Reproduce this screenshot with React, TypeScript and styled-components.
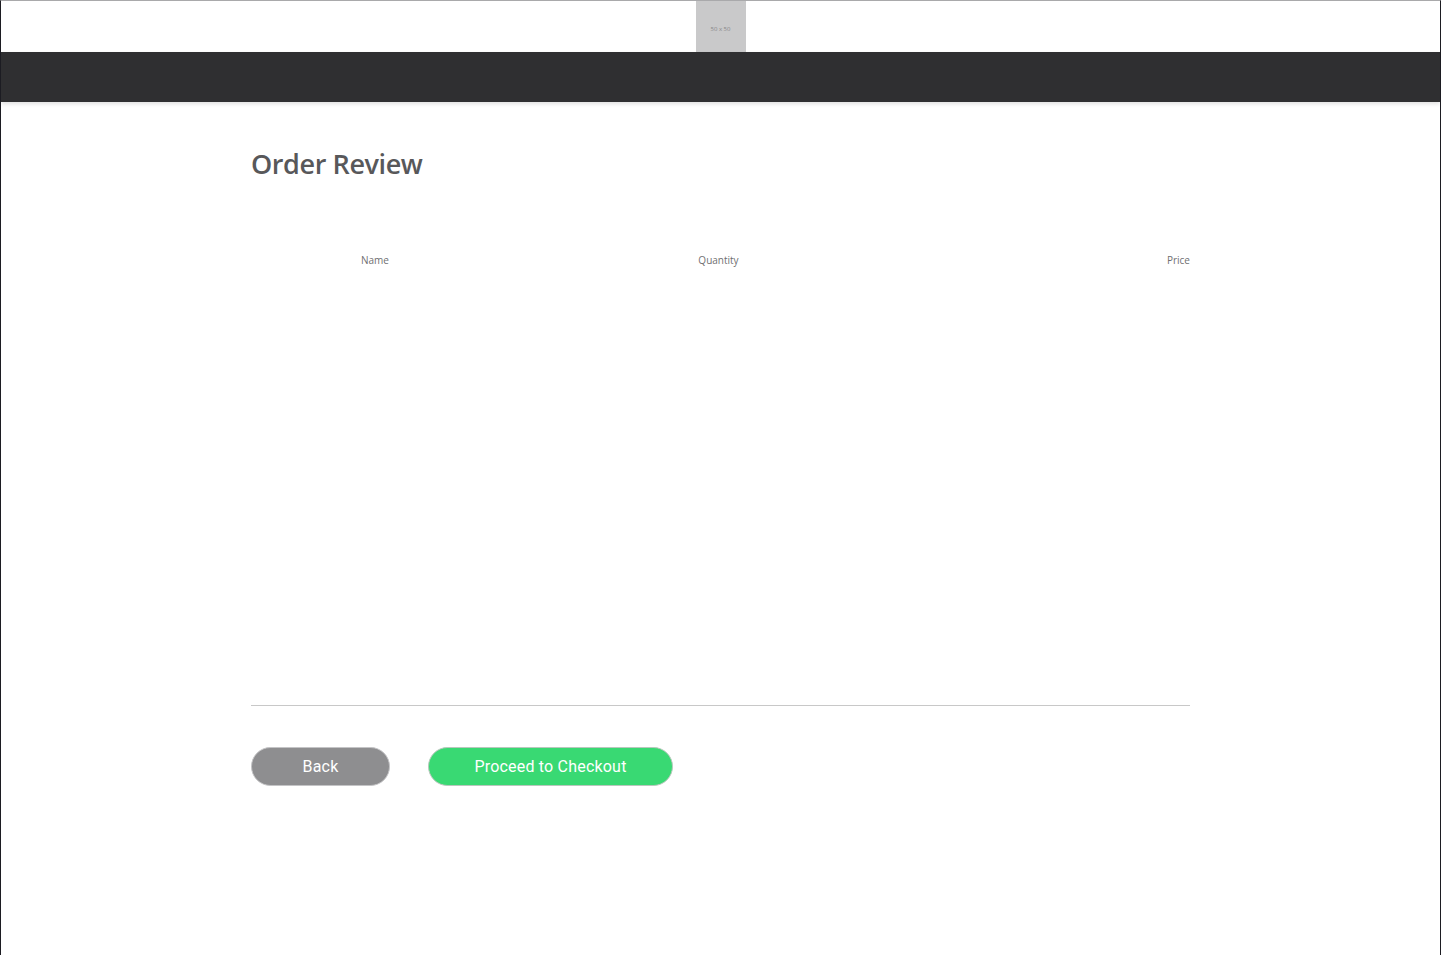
import styled, { createGlobalStyle } from "styled-components";

const GlobalStyle = createGlobalStyle`
  html, body {
    margin: 0;
    padding: 0;
    background: #ffffff;
  }
  * {
    box-sizing: border-box;
  }
`;

const Frame = styled.div`
  width: 1441px;
  height: 955px;
  border-top: 1px solid #a9a9ab;
  border-left: 1px solid #1c1c22;
  border-right: 1px solid #1c1c22;
  background: #ffffff;
  overflow: hidden;
`;

const TopBar = styled.header`
  height: 51px;
  display: flex;
  justify-content: center;
  background: #ffffff;
`;

const Placeholder = styled.div`
  width: 50px;
  height: 51px;
  padding-top: 4px;
  background: #c9c9ca;
  color: #888;
  font-family: "Open Sans", sans-serif;
  font-size: 6px;
  display: flex;
  align-items: center;
  justify-content: center;
`;

const NavBar = styled.nav`
  height: 50px;
  background: #2f2f31;
  box-shadow: 0 2px 4px rgba(0, 0, 0, 0.12);
  position: relative;
`;

const Main = styled.main`
  width: 939px;
  margin: 0 0 0 250px;
  padding-top: 44px;
`;

const Title = styled.h1`
  margin: 0;
  font-family: "Open Sans", sans-serif;
  font-weight: 600;
  font-size: 27px;
  letter-spacing: -0.4px;
  color: #58585a;
  line-height: 36px;
`;

const Table = styled.div`
  margin-top: 71px;
  height: 453px;
  border-bottom: 1px solid #c8c8c8;
`;

const HeadRow = styled.div`
  display: grid;
  grid-template-columns: 248px 439px 1fr;
  font-family: "Open Sans", sans-serif;
  font-size: 10px;
  color: #6f6f71;
  line-height: 14px;
`;

const HeadCell = styled.div<{ $align: "center" | "right" }>`
  text-align: ${({ $align }) => $align};
`;

const Actions = styled.div`
  display: flex;
  gap: 38px;
  margin-top: 41px;
`;

const Button = styled.button<{ $variant: "muted" | "go" }>`
  height: 39px;
  width: ${({ $variant }) => ($variant === "go" ? "245px" : "139px")};
  border-radius: 20px;
  border: 1px solid ${({ $variant }) => ($variant === "go" ? "#b9c7bd" : "#c4c4c6")};
  background: ${({ $variant }) => ($variant === "go" ? "#39d973" : "#8e8e90")};
  color: #ffffff;
  font-family: Roboto, "Liberation Sans", sans-serif;
  font-weight: 400;
  font-size: 16px;
  letter-spacing: 0.2px;
  padding: 0;
  cursor: pointer;
`;

export default function App() {
  return (
    <>
      <GlobalStyle />
      <Frame>
        <TopBar>
          <Placeholder>50 x 50</Placeholder>
        </TopBar>
        <NavBar />
        <Main>
          <Title>Order Review</Title>
          <Table>
            <HeadRow>
              <HeadCell $align="center">Name</HeadCell>
              <HeadCell $align="center">Quantity</HeadCell>
              <HeadCell $align="right">Price</HeadCell>
            </HeadRow>
          </Table>
          <Actions>
            <Button $variant="muted">Back</Button>
            <Button $variant="go">Proceed to Checkout</Button>
          </Actions>
        </Main>
      </Frame>
    </>
  );
}
